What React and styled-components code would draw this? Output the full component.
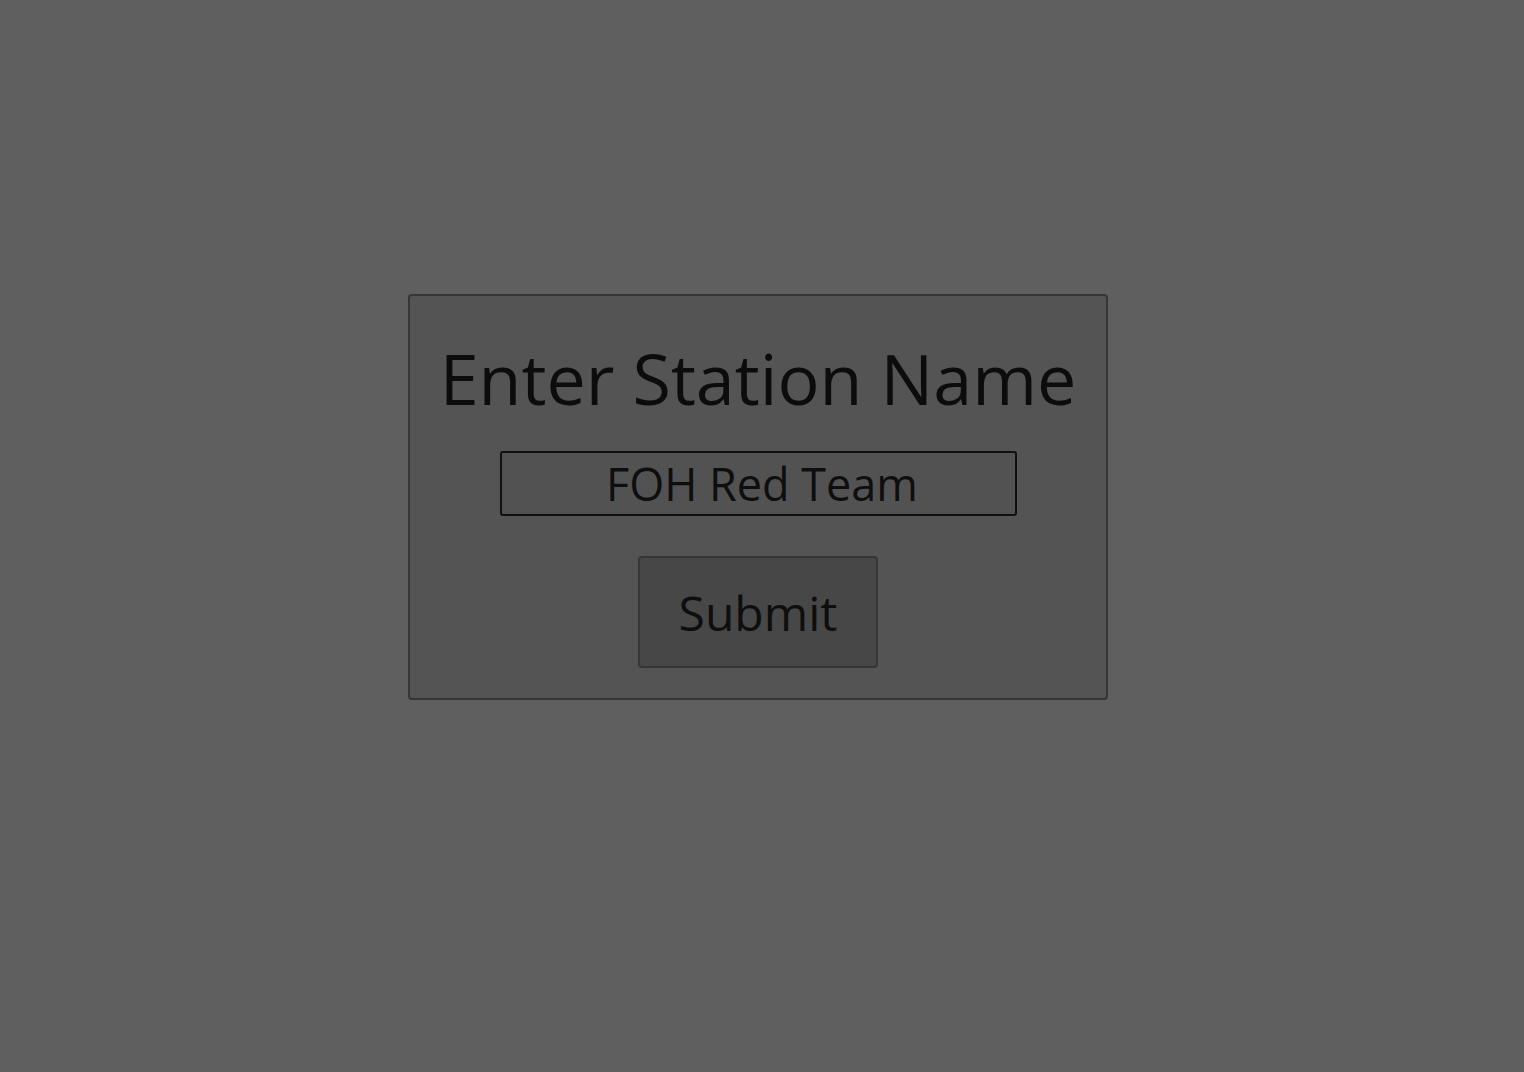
import React from "react";
import styled, { createGlobalStyle } from "styled-components";

const Global = createGlobalStyle`
  html, body { margin: 0; padding: 0; background: #5f5f5f; }
  body { font-family: "Open Sans", "Noto Sans", sans-serif; }
  * { box-sizing: border-box; }
`;

const Page = styled.div`
  min-height: 1072px;
  display: flex;
  justify-content: center;
  align-items: flex-start;
  padding-top: 294px;
  padding-right: 8px;
`;

const Card = styled.form`
  width: 700px;
  height: 406px;
  background: #545454;
  border: 2px solid #363636;
  border-radius: 4px;
  display: flex;
  flex-direction: column;
  align-items: center;
  padding-top: 40px;
`;

const Title = styled.h1`
  margin: 0;
  font-size: 70px;
  font-weight: 400;
  line-height: 1.2;
  color: #0c0c0c;
  letter-spacing: 0;
`;

const NameInput = styled.input`
  margin-top: 31px;
  width: 517px;
  height: 65px;
  border: 2px solid #101010;
  border-radius: 3px;
  background: #525252;
  color: #0e0e0e;
  font-family: "Open Sans", "Noto Sans", sans-serif;
  font-size: 45px;
  text-align: center;
  padding: 0 0 0 8px;
  outline: none;
`;

const SubmitButton = styled.button`
  margin-top: 40px;
  width: 240px;
  height: 112px;
  background: #474747;
  border: 2px solid #363636;
  border-radius: 4px;
  color: #0e0e0e;
  font-family: "Open Sans", "Noto Sans", sans-serif;
  font-size: 48px;
  padding: 0;
  cursor: pointer;
`;

export default function App() {
  return (
    <>
      <Global />
      <Page>
        <Card onSubmit={(e) => e.preventDefault()}>
          <Title>Enter Station Name</Title>
          <NameInput defaultValue="FOH Red Team" />
          <SubmitButton type="submit">Submit</SubmitButton>
        </Card>
      </Page>
    </>
  );
}
